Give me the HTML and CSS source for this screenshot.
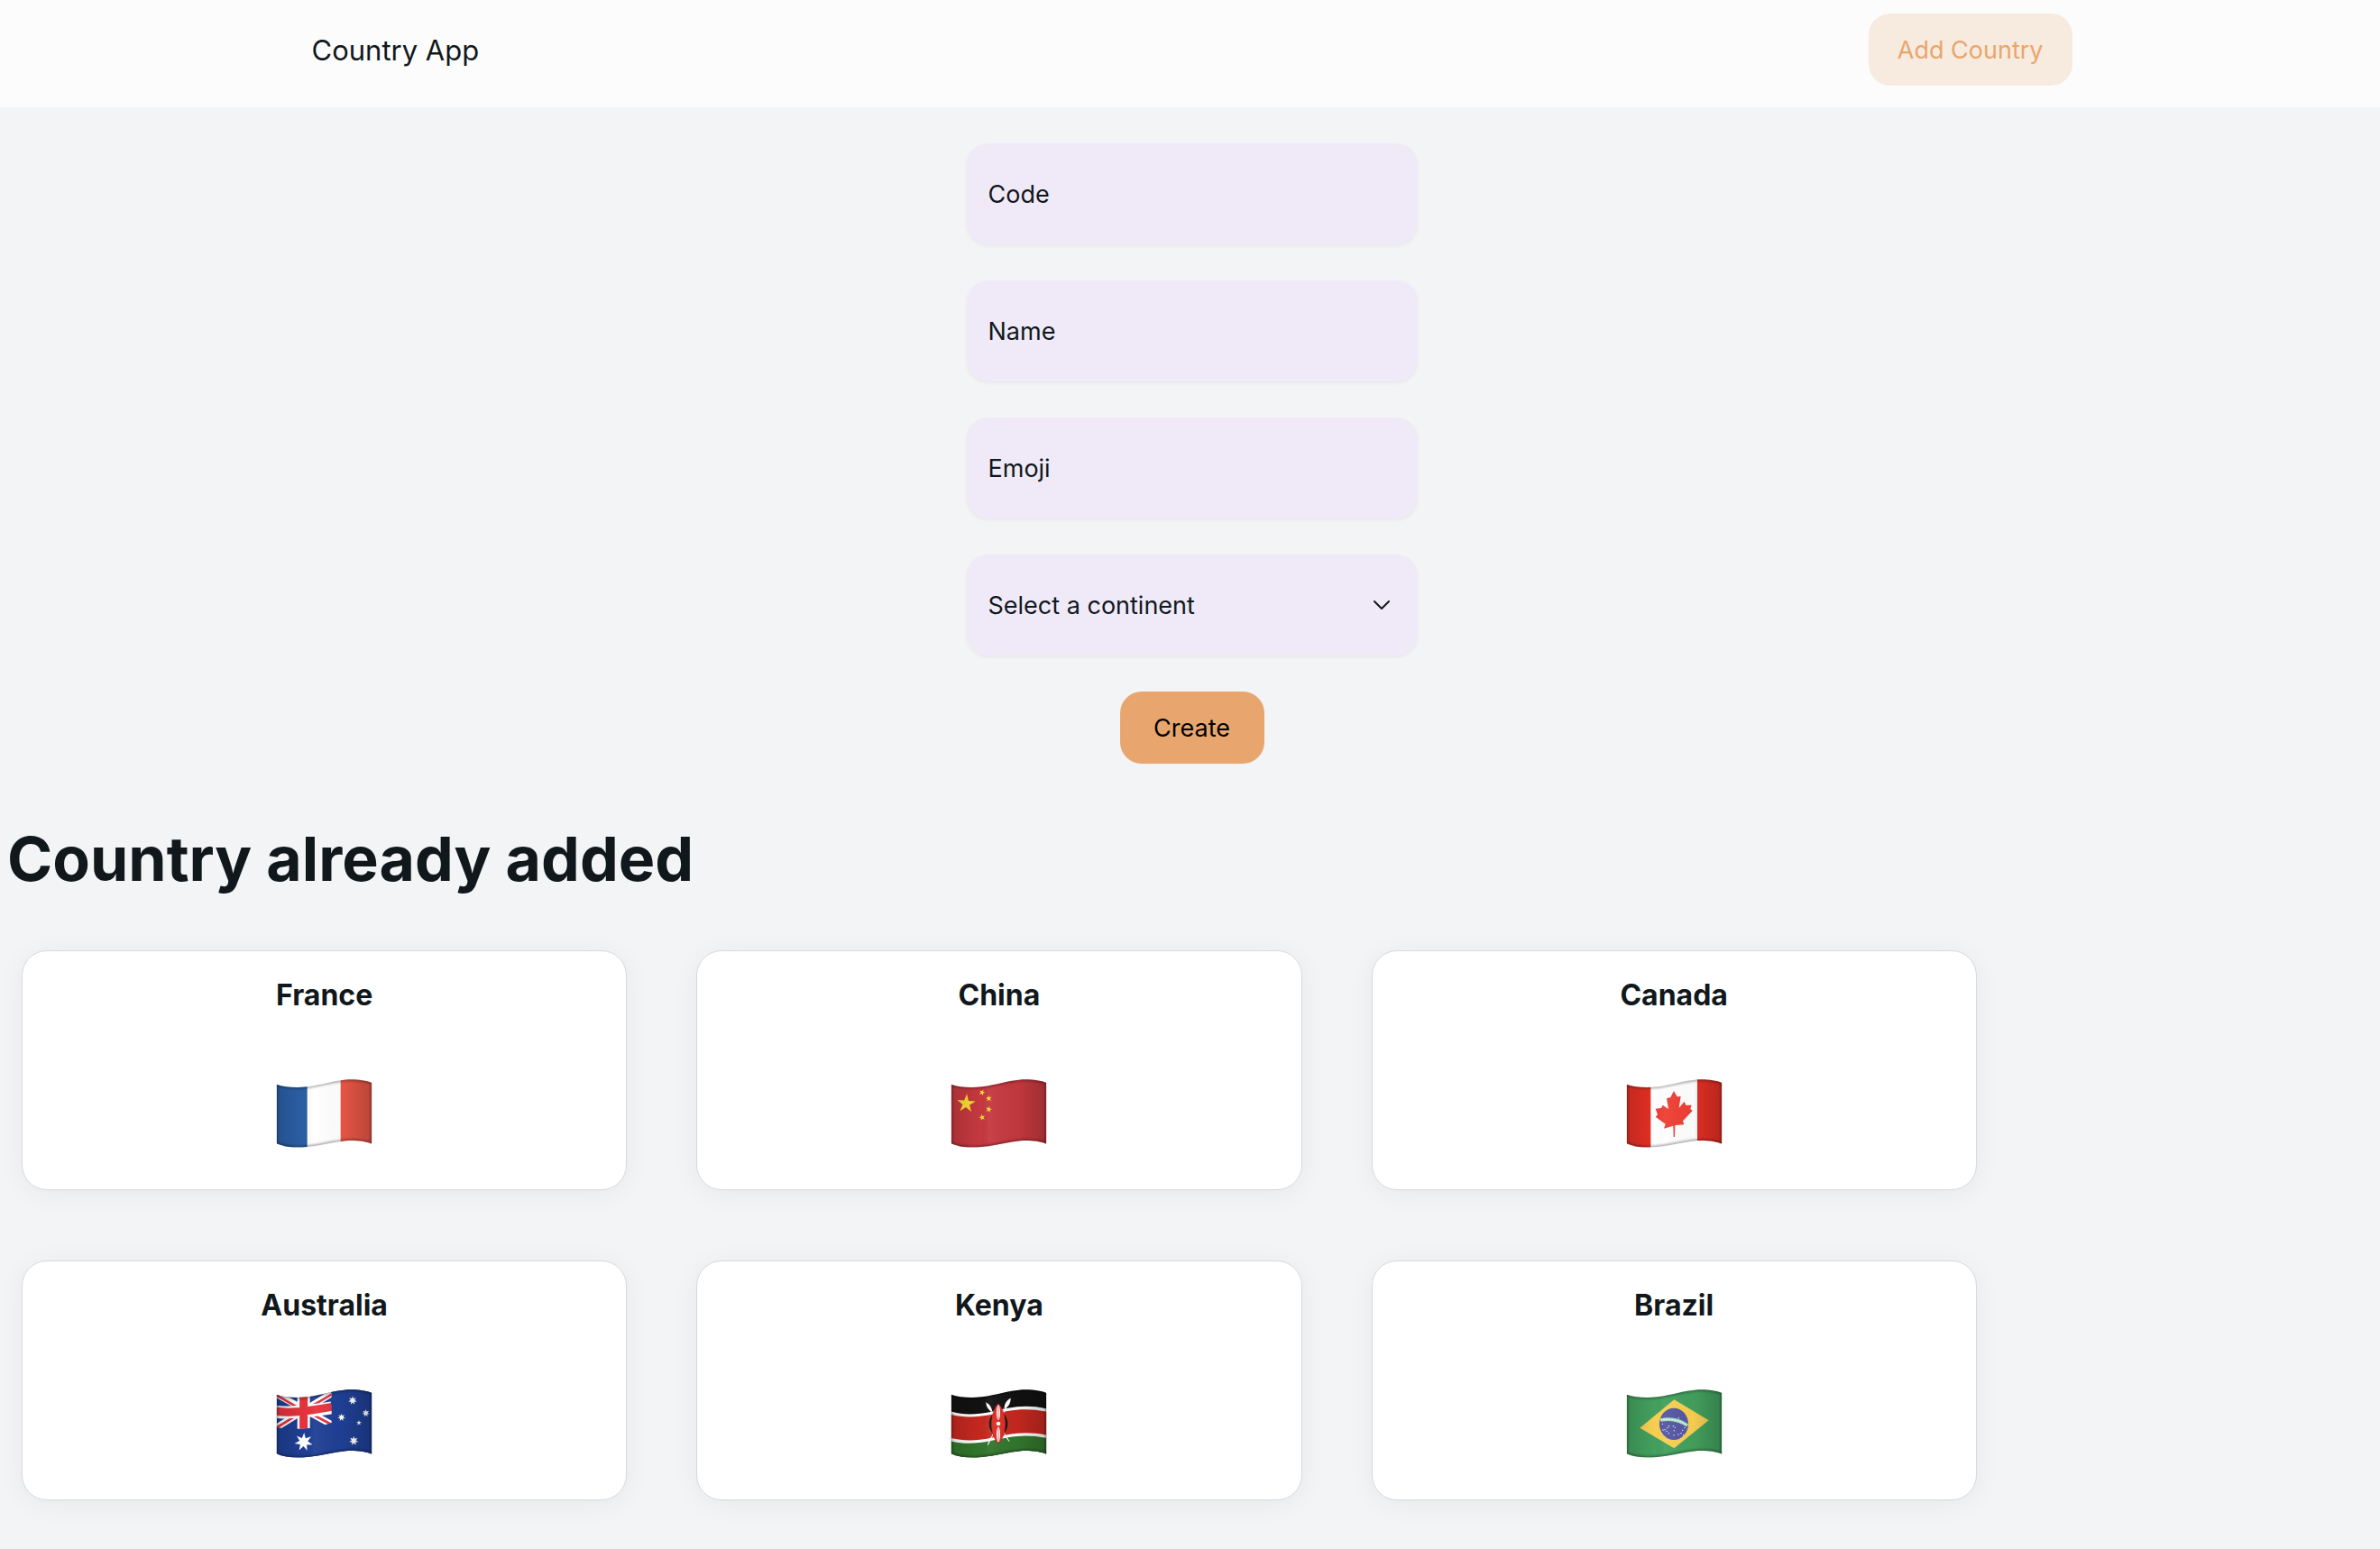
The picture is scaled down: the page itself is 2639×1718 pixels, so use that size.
FILE: index.html
```html
<!DOCTYPE html>
<html lang="en">
<head>
<meta charset="utf-8">
<meta name="viewport" content="width=device-width, initial-scale=1">
<title>Country App</title>
<link rel="stylesheet" href="styles.css">
</head>
<body>
<svg class="defs" aria-hidden="true">
  <defs>
    <path id="cloth" d="M48 68C75 77 110 80 150 76C200 70 235 56 285 52C315 51 345 54 365 63V266C345 257 315 254 285 255C235 259 200 272 150 276C110 280 75 277 48 265Z"/>
    <clipPath id="cloth-clip"><use href="#cloth"/></clipPath>
    <linearGradient id="folds">
      <stop offset="0" stop-color="#000" stop-opacity=".14"/>
      <stop offset=".3" stop-color="#000" stop-opacity="0"/>
      <stop offset=".4" stop-color="#fff" stop-opacity=".05"/>
      <stop offset=".7" stop-color="#000" stop-opacity=".02"/>
      <stop offset="1" stop-color="#000" stop-opacity=".2"/>
    </linearGradient>
    <filter id="soft" x="-10%" y="-10%" width="120%" height="120%"><feGaussianBlur stdDeviation="4"/></filter>
    <g id="shade" clip-path="url(#cloth-clip)">
      <use href="#cloth" fill="url(#folds)"/>
      <use href="#cloth" fill="none" stroke="#000" stroke-opacity=".45" stroke-width="7" filter="url(#soft)"/>
    </g>
    <polygon id="star5" points="0,-1 .225,-.309 .951,-.309 .363,.118 .588,.809 0,.382 -.588,.809 -.363,.118 -.951,-.309 -.225,-.309"/>
    <polygon id="star7" points="0,-1 .195,-.405 .782,-.623 .439,-.1 .975,.223 .352,.281 .434,.901 0,.45 -.434,.901 -.352,.281 -.975,.223 -.439,-.1 -.782,-.623 -.195,-.405"/>
  </defs>
</svg>

<header class="navbar">
  <div class="navbar-inner">
    <span class="brand">Country App</span>
    <a class="btn btn-flat" href="#add">Add Country</a>
  </div>
</header>

<main>
  <form class="country-form" id="add">
    <input class="field" type="text" name="code" placeholder="Code" aria-label="Code">
    <input class="field" type="text" name="name" placeholder="Name" aria-label="Name">
    <input class="field" type="text" name="emoji" placeholder="Emoji" aria-label="Emoji">
    <div class="select">
      <select class="field" name="continent" aria-label="Continent">
        <option>Select a continent</option>
        <option>Africa</option>
        <option>America</option>
        <option>Asia</option>
        <option>Europe</option>
        <option>Oceania</option>
      </select>
      <svg class="chevron" viewBox="0 0 20 12" aria-hidden="true"><path d="M2 2L10 10L18 2"/></svg>
    </div>
    <button class="btn btn-solid" type="button">Create</button>
  </form>

  <h1 class="title">Country already added</h1>

  <section class="countries">
    <article class="card">
      <h2 class="card-name">France</h2>
      <svg class="flag" viewBox="46 48 321 234" role="img" aria-label="Flag of France">
        <g clip-path="url(#cloth-clip)">
          <rect x="40" y="40" width="330" height="250" fill="#fff"/>
          <rect x="40" y="40" width="110" height="250" fill="#2b5fa5"/>
          <rect x="261" y="40" width="110" height="250" fill="#e85646"/>
        </g>
        <use href="#shade"/>
      </svg>
    </article>

    <article class="card">
      <h2 class="card-name">China</h2>
      <svg class="flag" viewBox="46 48 321 234" role="img" aria-label="Flag of China">
        <g clip-path="url(#cloth-clip)">
          <rect x="40" y="40" width="330" height="250" fill="#c5383f"/>
          <g fill="#f8dc32">
            <use href="#star5" transform="translate(98 132) rotate(4) scale(32)"/>
            <use href="#star5" transform="translate(151 95) rotate(20) scale(11)"/>
            <use href="#star5" transform="translate(173 115) rotate(-8) scale(11)"/>
            <use href="#star5" transform="translate(173 151) rotate(12) scale(11)"/>
            <use href="#star5" transform="translate(151 178) rotate(-14) scale(11)"/>
          </g>
        </g>
        <use href="#shade"/>
      </svg>
    </article>

    <article class="card">
      <h2 class="card-name">Canada</h2>
      <svg class="flag" viewBox="46 48 321 234" role="img" aria-label="Flag of Canada">
        <g clip-path="url(#cloth-clip)">
          <rect x="40" y="40" width="330" height="250" fill="#fff"/>
          <rect x="40" y="40" width="88" height="250" fill="#e42f25"/>
          <rect x="283" y="40" width="90" height="250" fill="#e42f25"/>
          <path fill="#ee3f34" d="M205 90L194 111L181 115L187 150L168 137L163 147L144 149L151 169L144 176L177 200L172 215L203 206L204 243H208L209 204L239 202L235 190L267 156L260 149L264 137L245 137L240 125L222 146L228 108L216 109Z"/>
        </g>
        <use href="#shade"/>
      </svg>
    </article>

    <article class="card">
      <h2 class="card-name">Australia</h2>
      <svg class="flag" viewBox="46 45 321 234" role="img" aria-label="Flag of Australia">
        <g transform="translate(0 -3)">
          <g clip-path="url(#cloth-clip)">
            <rect x="40" y="40" width="330" height="250" fill="#1f3f94"/>
            <g fill="none">
              <path stroke="#fff" stroke-width="22" d="M44 64L231 168M44 180L231 64"/>
              <path stroke="#e4333c" stroke-width="8" d="M44 68L120 112M44 181L120 134M155 112L231 68M155 128L231 168"/>
              <path stroke="#fff" stroke-width="42" d="M44 126C85 130 130 127 231 112M138 70V182"/>
              <path stroke="#e4333c" stroke-width="27" d="M44 123C85 130 130 127 231 109M138 70V182"/>
            </g>
            <path fill="#1f3f94" d="M231 40H370V290H40V176C70 182 100 184 138 182C175 180 200 170 231 163Z"/>
            <g fill="#fff">
              <use href="#star7" transform="translate(138 226) rotate(3) scale(31)"/>
              <use href="#star7" transform="translate(301 88) scale(15)"/>
              <use href="#star7" transform="translate(264 144) scale(13)"/>
              <use href="#star7" transform="translate(345 130) scale(13)"/>
              <use href="#star7" transform="translate(305 222) scale(16)"/>
              <use href="#star5" transform="translate(322 162) scale(9)"/>
            </g>
          </g>
          <use href="#shade"/>
        </g>
      </svg>
    </article>

    <article class="card">
      <h2 class="card-name">Kenya</h2>
      <svg class="flag" viewBox="46 45 321 234" role="img" aria-label="Flag of Kenya">
        <g transform="translate(0 -3)">
          <g clip-path="url(#cloth-clip)">
            <rect x="40" y="40" width="330" height="250" fill="#111"/>
            <path fill="#32762c" d="M40 210C90 226 130 224 180 214C240 202 290 186 370 205V300H40Z"/>
            <path fill="#fff" d="M40 122C90 138 130 135 180 126C240 112 290 98 370 116V214C290 196 240 210 180 222C130 232 90 234 40 222Z"/>
            <path fill="#c4281f" d="M40 133C90 147 130 144 180 135C240 121 290 109 370 126V204C290 187 240 201 180 213C130 222 90 224 40 211Z"/>
            <g stroke="#fff" stroke-width="3"><path d="M168 104L241 224M242 88L170 236"/></g>
            <path fill="#fff" d="M164 94C176 101 184 113 185 126C172 120 164 108 164 94ZM246 80C230 88 224 102 225 116C240 108 246 96 246 80ZM169 238L174 217L182 208ZM241 225L231 212L228 200Z"/>
            <ellipse cx="205" cy="165" rx="31" ry="39" fill="#161616"/>
            <path fill="#c4281f" d="M190 125C180 148 180 183 190 207H220C230 183 230 148 220 125Z"/>
            <path fill="#dc2d24" stroke="#a81b16" stroke-width="1" d="M205 98C235 126 235 204 205 232C175 204 175 126 205 98Z"/>
            <ellipse cx="205" cy="128" rx="6" ry="25" fill="#fff"/>
            <ellipse cx="205" cy="201" rx="6" ry="25" fill="#fff"/>
            <circle cx="205" cy="165" r="7" fill="#fff"/>
            <path stroke="#dc2d24" stroke-width="2" d="M205 106V150M205 180V222"/>
          </g>
          <use href="#shade"/>
        </g>
      </svg>
    </article>

    <article class="card">
      <h2 class="card-name">Brazil</h2>
      <svg class="flag" viewBox="46 45 321 234" role="img" aria-label="Flag of Brazil">
        <g transform="translate(0 -3)">
          <g clip-path="url(#cloth-clip)">
            <rect x="40" y="40" width="330" height="250" fill="#43a05e"/>
            <path fill="#f7cf51" d="M92 179L206 85L321 154L206 247Z"/>
            <ellipse cx="205" cy="166" rx="48" ry="53" fill="#5457a3"/>
            <path fill="none" stroke="#a9e0c0" stroke-width="11" d="M161 153C190 147 223 152 250 171"/>
            <path fill="none" stroke="#fff" stroke-width="3" stroke-dasharray="5 4" d="M161 153C190 147 223 152 250 171"/>
            <g fill="#fff">
              <circle cx="167" cy="166" r="2"/><circle cx="175" cy="185" r="2"/><circle cx="184" cy="179" r="2"/>
              <circle cx="181" cy="190" r="2"/><circle cx="188" cy="197" r="2"/><circle cx="189" cy="173" r="2"/>
              <circle cx="203" cy="173" r="2"/><circle cx="209" cy="178" r="2"/><circle cx="206" cy="188" r="2"/>
              <circle cx="205" cy="203" r="2"/><circle cx="220" cy="201" r="2"/><circle cx="221" cy="146" r="2"/>
              <circle cx="234" cy="187" r="2"/><circle cx="241" cy="179" r="2"/><circle cx="229" cy="197" r="2"/>
              <circle cx="237" cy="203" r="2"/><circle cx="169" cy="186" r="2"/>
            </g>
          </g>
          <use href="#shade"/>
        </g>
      </svg>
    </article>
  </section>
</main>
</body>
</html>
```

FILE: styles.css
```css
* {
  box-sizing: border-box;
}

body {
  margin: 0;
  background: #f2f4f6;
  color: #11181c;
  font-family: Inter, "Liberation Sans", sans-serif;
  font-size: 27px;
}

.defs {
  display: block;
  width: 0;
  height: 0;
}

.navbar {
  padding: 15px 24px 24px;
  background: #fcfcfc;
}

.navbar-inner {
  display: flex;
  align-items: center;
  justify-content: space-between;
  max-width: 1956px;
  margin: 0 auto;
}

.brand {
  padding-left: 4px;
  font-size: 31px;
}

.btn {
  display: inline-flex;
  align-items: center;
  justify-content: center;
  height: 80px;
  padding: 0 32px;
  border: 0;
  border-radius: 24px;
  font: inherit;
  text-decoration: none;
  cursor: pointer;
}

.btn-flat {
  background: #f7ebdf;
  color: #e8a66e;
}

.btn-solid {
  min-width: 160px;
  background: #e8a66e;
  color: #000;
}

.country-form {
  display: flex;
  flex-direction: column;
  align-items: center;
  gap: 40px;
  padding: 40px 24px 51px 28px;
}

.field {
  width: 500px;
  max-width: 100%;
  height: 112px;
  padding: 0 24px;
  border: 0;
  border-radius: 24px;
  background: #f0eaf8;
  box-shadow: 0 2px 4px rgba(0, 0, 0, 0.05);
  color: #11181c;
  font: inherit;
  appearance: none;
}

.field::placeholder {
  color: #11181c;
  opacity: 1;
}

.select {
  display: grid;
  align-items: center;
}

.select > * {
  grid-area: 1 / 1;
}

.chevron {
  justify-self: end;
  width: 20px;
  height: 12px;
  margin-right: 30px;
  fill: none;
  stroke: #11181c;
  stroke-width: 2;
  stroke-linecap: round;
  stroke-linejoin: round;
  pointer-events: none;
}

.title {
  margin: 0 0 48px;
  padding: 0 8px;
  font-size: 68px;
  font-weight: 700;
  line-height: 108px;
}

.countries {
  display: grid;
  grid-template-columns: repeat(3, 1fr);
  gap: 78px 77px;
  width: 84%;
  padding: 0 25px 54px 24px;
}

.card {
  display: flex;
  flex-direction: column;
  align-items: center;
  gap: 68px;
  padding: 25px 24px 45px;
  border: 1px solid #d7d9db;
  border-radius: 28px;
  background: #fff;
  box-shadow: 0 4px 30px rgba(0, 0, 0, 0.05);
}

.card-name {
  margin: 0;
  font-size: 32px;
  font-weight: 700;
  line-height: 48px;
}

.flag {
  display: block;
  width: 107px;
  height: 78px;
}
```
